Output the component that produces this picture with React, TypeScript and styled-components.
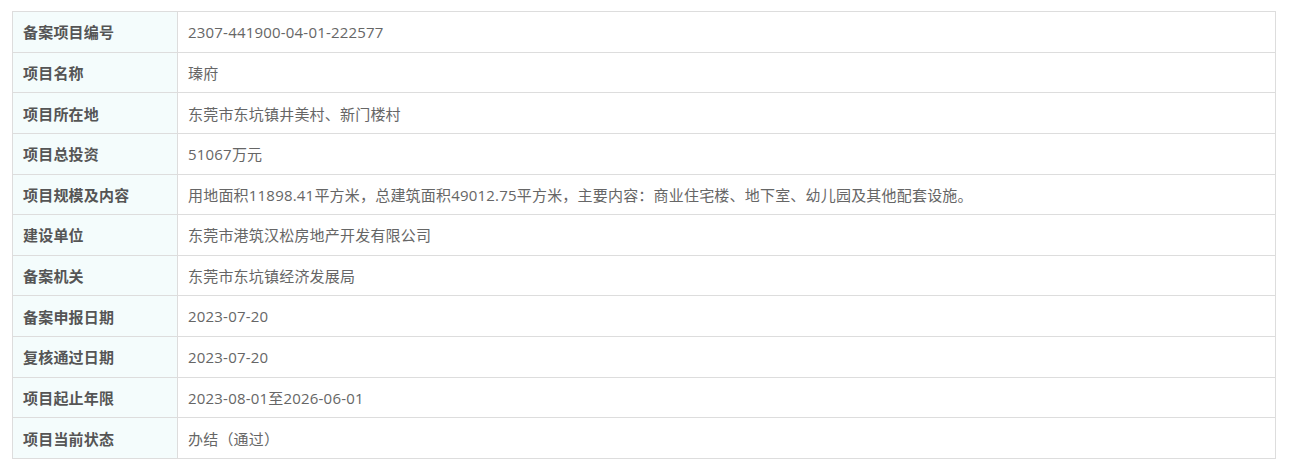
import React from 'react';
import styled, { createGlobalStyle } from 'styled-components';

const GlobalStyle = createGlobalStyle`
  html, body {
    margin: 0;
    padding: 0;
    background: #ffffff;
  }
`;

const Page = styled.div`
  padding: 11px 15px 10px 12px;
  font-family: "Open Sans", "Noto Sans CJK SC", sans-serif;
`;

const InfoTable = styled.table`
  width: 1264px;
  height: 448px;
  border-collapse: collapse;
  table-layout: fixed;
  font-size: 15px;
  letter-spacing: 0.2px;
`;

const LabelCell = styled.th`
  width: 144px;
  padding: 0 10px;
  text-align: left;
  font-weight: bold;
  color: #555555;
  background-color: #f4fcfc;
  border: 1px solid #dddddd;
`;

const ValueCell = styled.td`
  padding: 0 10px;
  text-align: left;
  color: #666666;
  background-color: #ffffff;
  border: 1px solid #dddddd;
`;

const rows: [string, string][] = [
  ['备案项目编号', '2307-441900-04-01-222577'],
  ['项目名称', '瑧府'],
  ['项目所在地', '东莞市东坑镇井美村、新门楼村'],
  ['项目总投资', '51067万元'],
  ['项目规模及内容', '用地面积11898.41平方米，总建筑面积49012.75平方米，主要内容：商业住宅楼、地下室、幼儿园及其他配套设施。'],
  ['建设单位', '东莞市港筑汉松房地产开发有限公司'],
  ['备案机关', '东莞市东坑镇经济发展局'],
  ['备案申报日期', '2023-07-20'],
  ['复核通过日期', '2023-07-20'],
  ['项目起止年限', '2023-08-01至2026-06-01'],
  ['项目当前状态', '办结（通过）'],
];

const App = () => {
  return (
    <>
      <GlobalStyle />
      <Page>
        <InfoTable>
          <tbody>
            {rows.map(([label, value]) => (
              <tr key={label}>
                <LabelCell>{label}</LabelCell>
                <ValueCell>{value}</ValueCell>
              </tr>
            ))}
          </tbody>
        </InfoTable>
      </Page>
    </>
  );
};

export default App;
